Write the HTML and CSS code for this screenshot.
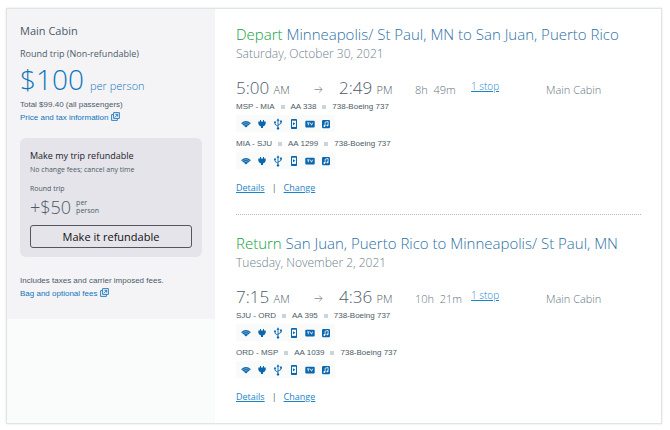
FILE: index.html
```html
<!DOCTYPE html>
<html lang="en">
<head>
  <meta charset="UTF-8">
  <meta name="viewport" content="width=device-width, initial-scale=1.0">
  <title>Trip summary</title>
  <link rel="stylesheet" href="styles.css">
</head>
<body>
  <!-- Icon sprite -->
  <svg class="sprite" aria-hidden="true">
    <symbol id="wifi" viewBox="0 0 10 10">
      <path d="M0.1 4.2Q5 0 9.9 4.2L5 8.6Z" fill="#0a66ad"/>
      <path d="M1.2 5.2Q5 2 8.8 5.2M2.7 6.4Q5 4.4 7.3 6.4" fill="none" stroke="#f9fbfb" stroke-width=".4"/>
    </symbol>
    <symbol id="plug" viewBox="0 0 10 10">
      <path d="M3 1h1v1.6h2V1h1v1.6h1.7v2.2Q8.2 7 6 7.6V9H4V7.6Q1.8 7 1.3 4.8V2.6H3Z" fill="#0a66ad"/>
    </symbol>
    <symbol id="usb" viewBox="0 0 10 12">
      <path d="M5 2v8M5 8.2L2 6.4V4.4M5 7.2L8 5.4V3.6" fill="none" stroke="#0a66ad" stroke-width=".9"/>
      <path d="M5 .3L6.5 2.7h-3Z" fill="#0a66ad"/>
      <circle cx="5" cy="10.4" r="1.2" fill="#0a66ad"/>
      <circle cx="2" cy="4.2" r="1" fill="#0a66ad"/>
      <path d="M7.1 2.6h1.8v1.8H7.1Z" fill="#0a66ad"/>
    </symbol>
    <symbol id="phone" viewBox="0 0 10 12">
      <rect x="2" y="1" width="6" height="10" rx=".8" fill="#0a66ad"/>
      <path d="M3 2.7h4v6.2H3Z" fill="#f9fbfb"/>
      <path d="M4 4.3L6.4 5.8L4 7.3Z" fill="#0a66ad"/>
    </symbol>
    <symbol id="tv" viewBox="0 0 10 10">
      <rect x=".3" y="1.8" width="9.4" height="6.6" rx="1" fill="#0a66ad"/>
      <path d="M2 3.9h2.6M3.3 3.9v2.5M5.3 3.7l1.2 2.5 1.2-2.5" fill="none" stroke="#fff" stroke-width=".8"/>
    </symbol>
    <symbol id="music" viewBox="0 0 10 10">
      <rect x="1" y="1" width="8" height="8.2" rx="1.2" fill="#0a66ad"/>
      <path d="M4.1 7V3.2l3-.7v3.9" fill="none" stroke="#fff" stroke-width=".8"/>
      <circle cx="3.4" cy="7" r=".9" fill="#fff"/>
      <circle cx="6.4" cy="6.4" r=".9" fill="#fff"/>
    </symbol>
    <symbol id="newwin" viewBox="0 0 9 9">
      <path d="M2.6.6h5.8v5.8H2.6ZM2.4 2.6H.6v5.8h5.8V6.6M3.8 5.4L6.7 2.4M4.4 2.3h2.3v2.3" fill="none" stroke="#1b78bb" stroke-width=".9"/>
    </symbol>
    <symbol id="arrow" viewBox="0 0 9 9">
      <path d="M.5 4.5h7.6M5.2 1.6L8.1 4.5L5.2 7.4" fill="none" stroke="#8796a0" stroke-width=".9"/>
    </symbol>
  </svg>

  <div class="card">
    <!-- Price column -->
    <aside class="sidebar">
      <div class="fare">
        <h2 class="cabin-name">Main Cabin</h2>
        <p class="fare-type">Round trip (Non-refundable)</p>
        <p class="price"><span class="amount">$100</span> <span class="unit">per person</span></p>
        <p class="note">Total $99.40 (all passengers)</p>
        <a class="note-link" href="#">Price and tax information <svg class="newwin"><use href="#newwin"/></svg></a>

        <div class="upsell">
          <h3>Make my trip refundable</h3>
          <p class="upsell-text">No change fees; cancel any time</p>
          <p class="upsell-type">Round trip</p>
          <div class="upsell-price">
            <span class="upsell-amount">+$50</span>
            <span class="upsell-per">per<br>person</span>
          </div>
          <button type="button">Make it refundable</button>
        </div>

        <p class="note">Includes taxes and carrier imposed fees.</p>
        <a class="note-link" href="#">Bag and optional fees <svg class="newwin"><use href="#newwin"/></svg></a>
      </div>
    </aside>

    <!-- Flights -->
    <main class="flights">
      <section class="slice">
        <h1><span class="direction">Depart</span> Minneapolis/ St Paul, MN to San Juan, Puerto Rico</h1>
        <p class="date">Saturday, October 30, 2021</p>
        <div class="times">
          <span class="time">5:00 <small>AM</small></span>
          <svg class="arrow"><use href="#arrow"/></svg>
          <span class="time">2:49 <small>PM</small></span>
          <span class="duration">8h&nbsp; 49m</span>
          <a class="stops" href="#">1 stop</a>
          <span class="cabin">Main Cabin</span>
        </div>
        <div class="segment"><span>MSP - MIA</span><i></i><span>AA 338</span><i></i><span>738-Boeing 737</span></div>
        <div class="amenities">
          <svg><use href="#wifi"/></svg>
          <svg><use href="#plug"/></svg>
          <svg><use href="#usb"/></svg>
          <svg><use href="#phone"/></svg>
          <svg><use href="#tv"/></svg>
          <svg><use href="#music"/></svg>
        </div>
        <div class="segment"><span>MIA - SJU</span><i></i><span>AA 1299</span><i></i><span>738-Boeing 737</span></div>
        <div class="amenities">
          <svg><use href="#wifi"/></svg>
          <svg><use href="#plug"/></svg>
          <svg><use href="#usb"/></svg>
          <svg><use href="#phone"/></svg>
          <svg><use href="#tv"/></svg>
          <svg><use href="#music"/></svg>
        </div>
        <div class="actions"><a href="#">Details</a><span>|</span><a href="#">Change</a></div>
      </section>

      <section class="slice">
        <h1><span class="direction">Return</span> San Juan, Puerto Rico to Minneapolis/ St Paul, MN</h1>
        <p class="date">Tuesday, November 2, 2021</p>
        <div class="times">
          <span class="time">7:15 <small>AM</small></span>
          <svg class="arrow"><use href="#arrow"/></svg>
          <span class="time">4:36 <small>PM</small></span>
          <span class="duration">10h&nbsp; 21m</span>
          <a class="stops" href="#">1 stop</a>
          <span class="cabin">Main Cabin</span>
        </div>
        <div class="segment"><span>SJU - ORD</span><i></i><span>AA 395</span><i></i><span>738-Boeing 737</span></div>
        <div class="amenities">
          <svg><use href="#wifi"/></svg>
          <svg><use href="#plug"/></svg>
          <svg><use href="#usb"/></svg>
          <svg><use href="#phone"/></svg>
          <svg><use href="#tv"/></svg>
          <svg><use href="#music"/></svg>
        </div>
        <div class="segment"><span>ORD - MSP</span><i></i><span>AA 1039</span><i></i><span>738-Boeing 737</span></div>
        <div class="amenities">
          <svg><use href="#wifi"/></svg>
          <svg><use href="#plug"/></svg>
          <svg><use href="#usb"/></svg>
          <svg><use href="#phone"/></svg>
          <svg><use href="#tv"/></svg>
          <svg><use href="#music"/></svg>
        </div>
        <div class="actions"><a href="#">Details</a><span>|</span><a href="#">Change</a></div>
      </section>
    </main>
  </div>
</body>
</html>
```

FILE: styles.css
```css
* {
  box-sizing: border-box;
}

body {
  margin: 0;
  padding: 8px 8px 6px 6px;
  background: #fff;
  font-family: "Open Sans", "Noto Sans", sans-serif;
  font-weight: 300;
  color: #4c5b66;
}

h1, h2, h3, p {
  margin: 0;
  font-weight: 300;
}

a {
  color: #1b85cc;
}

.sprite {
  display: none;
}

.card {
  display: flex;
  border: 1px solid #dfe5e5;
  box-shadow: 0 0 2px #dde3e3;
}

/* Price column */
.sidebar {
  width: 208px;
  flex-shrink: 0;
  background: #fafcfb;
}

.fare {
  padding: 14px 13px 19px;
  background: #f4f4f7;
}

.cabin-name {
  font-size: 11px;
  font-weight: 400;
  line-height: 16px;
  margin-bottom: 7px;
}

.fare-type {
  font-size: 9px;
  font-weight: 400;
  line-height: 16px;
}

.price {
  display: flex;
  align-items: baseline;
  gap: 6px;
  margin-bottom: 2px;
  color: #1474b8;
}

.amount {
  font-size: 28px;
  line-height: 34px;
}

.unit {
  font-size: 11px;
  line-height: 16px;
}

.note,
.note-link {
  display: block;
  font-family: "Liberation Sans", Arial, sans-serif;
  font-size: 8px;
  font-weight: 400;
  line-height: 13px;
}

.note-link {
  color: #0f74ba;
  text-decoration: none;
}

.newwin {
  width: 9px;
  height: 9px;
  vertical-align: -1px;
}

/* Refundable offer */
.upsell {
  margin: 14px 0 17px;
  padding: 10px 10px 9px;
  border-radius: 6px;
  background: #e5e4ea;
}

.upsell h3 {
  font-size: 9px;
  font-weight: 500;
  line-height: 15px;
  color: #22222a;
}

.upsell-text {
  font-size: 7px;
  font-weight: 400;
  line-height: 14px;
}

.upsell-type {
  margin-top: 6px;
  font-size: 7px;
  font-weight: 400;
  line-height: 12px;
}

.upsell-price {
  display: flex;
  align-items: center;
  gap: 5px;
  margin-bottom: 6px;
}

.upsell-amount {
  font-size: 18px;
  line-height: 24px;
}

.upsell-per {
  font-size: 7px;
  font-weight: 400;
  line-height: 8px;
}

.upsell button {
  display: block;
  width: 100%;
  height: 23px;
  padding: 0;
  border: 1px solid #55555c;
  border-radius: 3px;
  background: transparent;
  font-family: inherit;
  font-size: 11px;
  font-weight: 500;
  color: #111;
  cursor: pointer;
}

/* Flights */
.flights {
  flex: 1;
  padding: 0 20px 0 21px;
}

.slice {
  padding: 14px 0 19px;
}

.slice + .slice {
  padding-top: 17px;
  border-top: 1px dotted #b4bbc0;
}

h1 {
  font-size: 15px;
  line-height: 22px;
  color: #2d71a5;
}

.direction {
  color: #0f9f3d;
}

.date {
  margin-bottom: 15px;
  font-size: 12px;
  line-height: 18px;
  color: #6f828c;
}

.times {
  display: grid;
  grid-template-columns: 78fr 25fr 76fr 56fr 75fr 95fr;
  align-items: baseline;
  height: 20px;
  margin-bottom: 2px;
  line-height: 16px;
  white-space: nowrap;
}

.time {
  font-size: 17px;
  line-height: 20px;
}

.time small,
.duration,
.cabin {
  font-size: 11px;
}

.duration,
.cabin {
  color: #66757f;
}

.stops {
  align-self: start;
  font-size: 10px;
}

.arrow {
  width: 9px;
  height: 9px;
}

.segment {
  display: flex;
  align-items: center;
  gap: 6px;
  font-family: "Liberation Sans", Arial, sans-serif;
  font-size: 8px;
  font-weight: 400;
  line-height: 14px;
}

.segment i {
  width: 4px;
  height: 4px;
  background: #c9d5d9;
}

.amenities {
  display: flex;
  align-items: center;
  gap: 6px;
  width: max-content;
  height: 17px;
  margin: 1px 0 5px;
  padding: 0 4px 0 5px;
  background: #f9fbfb;
}

.amenities svg {
  width: 10px;
  height: 12px;
}

.actions {
  display: flex;
  gap: 7px;
  margin-top: 12px;
  font-size: 9px;
  font-weight: 400;
  line-height: 14px;
}
```
